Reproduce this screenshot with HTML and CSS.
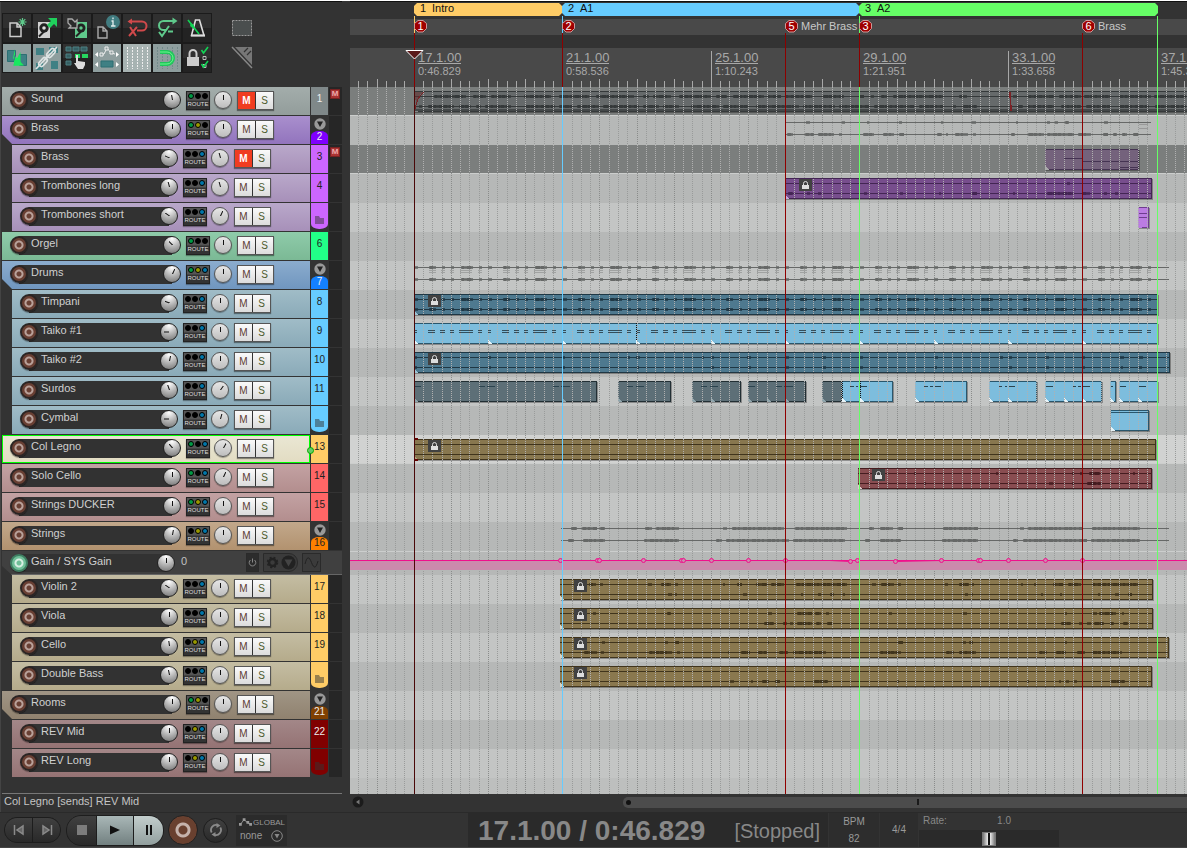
FILE: index.html
```html
<!DOCTYPE html>
<html lang="en">
<head>
<meta charset="utf-8">
<title>Arrange view</title>
<link rel="stylesheet" href="styles.css">
</head>
<body>
<div class="app">
  <main class="workspace">
    <section class="panel">
      <header class="toolbar">
        <div class="tools">
          <button class="tool" aria-label="New project"><svg viewBox="0 0 28 28"><path d="M7 9h7l4 4v9.500H7zM14 9v4h4" fill="none" stroke="#ccc" stroke-width="1.500"/><path d="M19.500 4v8M15.500 8h8M16.700 5.200l5.600 5.600M22.300 5.200l-5.600 5.600" stroke="#5fc98b" stroke-width="1.200"/></svg></button>
          <button class="tool" aria-label="Open project"><svg viewBox="0 0 28 28"><path d="M5 8h12v16H5z" fill="#d0d0d0"/><circle cx="11" cy="14" r="4.700" fill="#222"/><circle cx="11" cy="14" r="1.800" fill="#ddd"/><path d="M6 22.500l5-5" stroke="#222" stroke-width="2"/><path d="M15 4h9v9l-3-3-4 4-3-3 4-4z" fill="#1fd05c"/></svg></button>
          <button class="tool" aria-label="Save project"><svg viewBox="0 0 28 28"><path d="M12 8h12v16H12z" fill="#5fc98b"/><circle cx="18" cy="14" r="4.500" fill="#222"/><circle cx="18" cy="14" r="1.700" fill="#5fc98b"/><path d="M13 22.500l5-5" stroke="#222" stroke-width="2"/><path d="M5 5h4l3 3 2-2v8H6l2-2-3-3z" fill="#2a2a2a" stroke="#aaa" stroke-width="1.300"/></svg></button>
          <button class="tool" aria-label="Project settings"><svg viewBox="0 0 28 28"><path d="M5 13h5l4 4v7H5zM10 13v4h4" fill="none" stroke="#aaa" stroke-width="1.400"/><circle cx="20" cy="8" r="7" fill="#417c80"/><path d="M18.500 7H20v5M18 12h4.500M20 3.500v1.800" stroke="#e5eeee" stroke-width="1.300" fill="none"/></svg></button>
          <button class="tool" aria-label="Undo"><svg viewBox="0 0 28 28" fill="none" stroke="#d0494b" stroke-width="2"><path d="M6 7.500h13a4.500 4.500 0 0 1 0 9h-5M7 13l6 9M14 13l-8 9"/><path d="M4.500 7.500l4.500-3v6z" fill="#d0494b" stroke="none"/></svg></button>
          <button class="tool" aria-label="Redo"><svg viewBox="0 0 28 28" fill="none" stroke="#5fc98b" stroke-width="2"><path d="M22 7H10.500a4.300 4.300 0 0 0 0 9H13M6 18l3 4 7-10M15 17.500h5"/><path d="M24.500 7L19.500 3.500v7z" fill="#5fc98b" stroke="none"/></svg></button>
          <button class="tool" aria-label="Metronome"><svg viewBox="0 0 28 28" fill="none"><path d="M12.500 6h4l4.500 15.500H8.500z" stroke="#ddd" stroke-width="1.600"/><path d="M8 21.500h14" stroke="#ddd" stroke-width="2"/><path d="M5 6l11 14" stroke="#12d455" stroke-width="1.600"/><path d="M8 9l3 2 0 4-4-3z" fill="#12d455"/></svg></button>
          <button class="tool on" aria-label="Auto crossfade"><svg viewBox="0 0 28 28"><path d="M4.500 6.500h8v11h-8zM16.500 10.500h7v11h-7z" fill="#3f8084" stroke="#2c6f73"/><path d="M12 5v12L10 14zM11 21.500h10L11 11z" fill="#1ae85f"/><path d="M17.500 8v13.500H10z" fill="#1ae85f"/></svg></button>
          <button class="tool on" aria-label="Grouping"><svg viewBox="0 0 28 28"><path d="M3 4h8v7H3zM16 3h9v6h-9zM3 19h7v7H3zM18 17h7v8h-7z" fill="#3f8084"/><g fill="none" stroke="#dde3e3" stroke-width="1.700"><rect x="-5" y="-2.600" width="10" height="5.200" rx="2.600" transform="translate(10 18) rotate(-48)"/><rect x="-5" y="-2.600" width="10" height="5.200" rx="2.600" transform="translate(18 9) rotate(-48)"/><path d="M11 16l6-6M3 25L24 3"/></g></svg></button>
          <button class="tool" aria-label="Ripple editing"><svg viewBox="0 0 28 28"><path d="M3 3h5v4H3zM10 3h6v4h-6zM18 3h6v4h-6zM3 10h5v4H3zM3 17h5v4H3z" fill="#355f62" stroke="#4c8083"/><path d="M12 10h5v4h-5zM19 10h6v4h-6z" fill="#26d65f"/><path d="M13 11h2v6l7 1v3l-2 4h-5l-4-6 2 0z" fill="#ddd"/></svg></button>
          <button class="tool on" aria-label="Envelope points"><svg viewBox="0 0 28 28"><path d="M7 11l4-1 3-6 4 5 4 1" fill="none" stroke="#eee"/><path d="M7 9h3v3H7zM12 3h3v3h-3zM17 7h3v3h-3z" fill="#8e9e9e" stroke="#eee"/><path d="M8 17h12v6H8z" fill="#3f8084" stroke="#2c6f73"/><path d="M5 8v5L2 10.500zM23 8v5l3-2.500zM5 18v5l-3-2.500zM23 18v5l3-2.500z" fill="#fff"/></svg></button>
          <button class="tool pale" aria-label="Grid lines"><svg viewBox="0 0 28 28" stroke="#eee" stroke-dasharray="2 1"><path d="M4.500 3v22M9.500 3v22M14.500 3v22M19.500 3v22M24.500 3v22"/></svg></button>
          <button class="tool on" aria-label="Snap"><svg viewBox="0 0 28 28" fill="none"><path d="M4.500 3v22M9.500 3v22M14.500 3v22M19.500 3v22M24.500 3v22" stroke="#72898a" stroke-dasharray="2 1"/><path d="M7 8h7a6 6 0 0 1 0 12H7" stroke="#1fc75a" stroke-width="4"/><path d="M7 8h7a6 6 0 0 1 0 12H7" stroke="#6cf58f" stroke-width="1"/></svg></button>
          <button class="tool" aria-label="Locking"><svg viewBox="0 0 28 28" fill="none"><path d="M4 13h12v9H4z" fill="#ccc"/><path d="M6.500 13V9.500a3.500 3.500 0 0 1 7 0V13" stroke="#ccc" stroke-width="2"/><path d="M20 12.500h3v3h-3zM20 20.500h3v3h-3z" stroke="#bbb"/><path d="M18.500 6l2 3 4.500-6M18.500 20l2 3 4.500-6" stroke="#12d455" stroke-width="1.600"/></svg></button>
        </div>
        <div class="extras">
          <svg width="22" height="18" viewBox="0 0 22 18"><rect x="1.500" y="1.500" width="19" height="15" fill="#4a4e4e" stroke="#999" stroke-dasharray="2 1"/></svg>
          <svg width="22" height="24" viewBox="0 0 22 24"><path d="M1 1l20 21" stroke="#888" stroke-width="1.500" fill="none"/><path d="M4 1h17v18z" fill="#777"/><path d="M13 6l4-4M16 9l4-4" stroke="#333" stroke-width="1.200"/></svg>
        </div>
      </header>
      <div class="tracks" id="tracks"></div>
      <p class="status">Col Legno [sends] REV Mid</p>
    </section>
    <section class="timeline">
      <svg class="ruler" id="ruler" role="img" aria-label="Timeline ruler"></svg>
      <svg class="arrange" id="arrange" role="img" aria-label="Arrangement"></svg>
      <div class="scroll">
        <button class="scroll-back" aria-label="Scroll left"><svg width="12" height="12" viewBox="0 0 12 12"><circle cx="6" cy="6" r="5.500" fill="#1b1b1b"/><path d="M7.500 3.500v5L4 6z" fill="#777"/></svg></button>
        <div class="scroll-thumb"><i class="grip"></i><i class="mark"></i></div>
      </div>
    </section>
  </main>
  <footer class="transport">
    <div class="controls">
      <div class="pill small">
        <button aria-label="Go to start"><svg width="12" height="12" viewBox="0 0 12 12"><path d="M1.500 1v10M10 2v8L4 6z" fill="#666" stroke="#8a8a8a" stroke-width="1.500"/></svg></button>
        <button aria-label="Go to end"><svg width="12" height="12" viewBox="0 0 12 12"><path d="M10.500 1v10M2 2v8l6-4z" fill="#666" stroke="#8a8a8a" stroke-width="1.500"/></svg></button>
      </div>
      <div class="pill big">
        <button aria-label="Stop"><svg width="10" height="10"><rect width="10" height="10" fill="#7c7c7c"/></svg></button>
        <button class="lit play" aria-label="Play"><svg width="10" height="10"><path d="M0 0.500l10 4.500-10 4.500z" fill="#111"/></svg></button>
        <button class="lit" aria-label="Pause"><svg width="8" height="10"><path d="M1 0h2v10H1zM5 0h2v10H5z" fill="#111"/></svg></button>
      </div>
      <button class="record-big" aria-label="Record"></button>
      <button class="loop" aria-label="Repeat"><svg width="14" height="14" viewBox="0 0 14 14" fill="none" stroke="#8a8a8a" stroke-width="1.800"><path d="M2.700 9.500A5 5 0 0 1 8.500 2.200M11.300 4.500A5 5 0 0 1 5.500 11.800"/><path d="M7.500 0l4 2.500-4 2.500zM6.500 14l-4-2.500 4-2.500z" fill="#8a8a8a" stroke="none"/></svg></button>
      <div class="global">
        <label for="auto"><svg width="14" height="8" viewBox="0 0 14 8"><path d="M1.500 6.500l4-5 3.500 3 3 2" fill="none" stroke="#999"/><path d="M0 5h3v3H0zM4 0h3v3H4zM8 3h3v3H8zM11 5h3v3h-3z" fill="#999"/></svg>GLOBAL</label>
        <div class="auto">
          <select id="auto"><option>none</option></select>
          <svg width="12" height="12" viewBox="0 0 12 12"><circle cx="6" cy="6" r="5.300" fill="none" stroke="#888"/><path d="M3.500 4h5L6 8.500z" fill="#888"/></svg>
        </div>
      </div>
    </div>
    <div class="clock"><strong>17.1.00 / 0:46.829</strong><span>[Stopped]</span></div>
    <div class="cell bpm"><span>BPM</span><span>82</span></div>
    <div class="cell sig"><span>4/4</span></div>
    <div class="rate">
      <div class="rate-top"><label for="rate">Rate:</label><output for="rate">1.0</output></div>
      <input id="rate" type="range" min="0" max="100" value="50">
    </div>
  </footer>
</div>
<script src="app.js"></script>
</body>
</html>
```

FILE: styles.css
```css
* { box-sizing: border-box; }

body {
  margin: 0;
  background: #333;
  color: #c0c0c0;
  font: 11px/14px "Liberation Sans", Arial, sans-serif;
}

button {
  margin: 0;
  padding: 0;
  border: 0;
  background: none;
  color: inherit;
  font: inherit;
}

svg { display: block; }

.app {
  min-height: 100vh;
  display: flex;
  flex-direction: column;
  border-top: 1px solid #fff;
}

.workspace {
  flex: 1;
  display: grid;
  grid-template-columns: 342px minmax(0, 1fr);
  column-gap: 8px;
}

.panel {
  display: flex;
  flex-direction: column;
  padding-left: 2px;
  border-top: 1px solid #111;
  box-shadow: inset 1px 0 #444;
}

/* toolbar */
.toolbar {
  display: flex;
  gap: 19px;
  height: 85px;
  padding-top: 11px;
}

.tools {
  display: grid;
  grid-template-columns: repeat(7, 30px);
  grid-auto-rows: 30px;
}

.tool {
  border: 1px solid #1b1b1b;
  background: linear-gradient(#303030 50%, #232323 50%);
}
.tool.on { background: #8e9e9e; }
.tool.pale { background: #a7b3b2; }
.tool svg { width: 28px; height: 28px; }

.extras {
  display: flex;
  flex-direction: column;
  gap: 9px;
  padding-top: 6px;
}

/* track list */
.tracks { flex: 1; }

.track {
  display: flex;
  height: 29px;
  padding-bottom: 1px;
}

.strip {
  flex: 1;
  display: flex;
  align-items: flex-start;
  padding: 4px 36px 0 8px;
  background: linear-gradient(var(--top), var(--bottom));
}
.child .strip { margin-left: 10px; padding-right: 39px; }
.folder .strip { clip-path: polygon(0 0, 100% 0, 100% 100%, 10px 100%, 0 18px); }
.selected .strip { box-shadow: inset 0 0 0 1px #0f0; }
.selected { position: relative; }
.link {
  position: absolute;
  left: 305px;
  top: 12px;
  width: 7px;
  height: 7px;
  border: 1px solid #0a0;
  border-radius: 50%;
  background: #6c6;
}

.name {
  flex: 1;
  display: flex;
  height: 19px;
  margin-right: 5px;
  background: linear-gradient(90deg, transparent 9px, #323232 9px, #323232 calc(100% - 9px), transparent calc(100% - 9px));
}
.name span {
  flex: 1;
  padding-left: 3px;
  color: #d0d0d0;
}

.arm {
  width: 18px;
  height: 18px;
  border: 2px solid #2b2524;
  border-radius: 50%;
  background: radial-gradient(circle, #693f33 2px, #b9a19a 3px, #b9a19a 4px, #693f33 5px);
  box-shadow: 0 1px 1px #0006;
}

.knob, .dial {
  width: 18px;
  height: 18px;
  border-radius: 50%;
}
.knob {
  border: 1px solid #222;
  background: radial-gradient(circle at 50% 10%, #fff, #b5b5b5 50%, #707070);
}
.dial {
  margin: 0 5px 0 4px;
  border: 1px solid #555;
  background: linear-gradient(#e6e6e6, #bdbdbd);
  box-shadow: 0 1px 1px #0005;
}
.knob i, .dial i {
  display: block;
  width: 1px;
  height: 16px;
  margin: 0 auto;
  background: linear-gradient(transparent 3px, #111 3px, #111 8px, transparent 8px);
}

.route {
  width: 24px;
  height: 19px;
  padding-top: 1px;
  background: linear-gradient(#555 8px, #333 9px);
  color: #ddd;
  font-size: 6px;
  line-height: 9px;
  text-align: center;
  border: 1px solid #222;
  box-shadow: 0 1px 1px #0005;
}
.leds { display: flex; justify-content: center; gap: 1px; height: 7px; }
.leds i { width: 6px; height: 6px; border-radius: 50%; background: #000; border: 1px solid #000; }
.leds .g { background: #094; }
.leds .y { background: #990; }
.leds .b { background: #07a; }

.ms {
  display: flex;
  border: 1px solid #555;
  height: 19px;
  background: #333;
  gap: 1px;
  box-shadow: 0 1px 1px #0006;
}
.ms button {
  width: 17px;
  background: linear-gradient(#fafafa, #dcdcdc);
  color: #5c3b33;
  font-size: 10px;
  line-height: 17px;
}
.ms button + button { color: #4d5a2d; }
.ms .muted { background: #f03c20; color: #fff; font-weight: bold; }

.num {
  width: 17px;
  margin-left: 1px;
  padding-top: 6px;
  background: var(--num);
  color: #222;
  font-size: 10px;
  line-height: 12px;
  text-align: center;
}
.num.pale { color: #eee; }
.folder .num, .parent .num {
  display: flex;
  flex-direction: column;
  justify-content: space-between;
  align-items: center;
  padding-top: 2px;
  background: none;
}
.num b {
  width: 17px;
  height: 13px;
  border-radius: 8px 8px 0 0 / 5px 5px 0 0;
  background: var(--num);
  font-weight: normal;
  line-height: 12px;
}
.last .num {
  margin-bottom: 2px;
  padding: 13px 4px 0;
  border-radius: 0 0 8px 8px / 0 0 5px 5px;
}

.meter {
  width: 13px;
  margin-left: 1px;
  padding: 2px 1px;
  background: #262626;
}
.meter b {
  display: block;
  width: 10px;
  height: 10px;
  background: #a33;
  border: 1px solid #722;
  color: #eaa;
  font-size: 8px;
  line-height: 8px;
  text-align: center;
}

.envelope {
  display: flex;
  align-items: center;
  height: 24px;
  padding-left: 8px;
  padding-right: 21px;
  border-bottom: 1px solid #666;
  background: #404040;
  clip-path: polygon(0 0, 100% 0, 100% 100%, 10px 100%, 0 15px);
}
.envelope .name { flex: 0 0 165px; height: 18px; margin-right: 6px; }
.envelope .arm { border-color: #3f7f62; background: radial-gradient(circle, #6fbf98 2px, #d8eee2 3px, #d8eee2 4px, #6fbf98 5px); }
.envelope output { flex: 1; height: 18px; }
.env-tools { display: flex; gap: 4px; }
.env-tools button { border: 1px solid #2a2a2a; background: #3b3b3b; height: 19px; }
.env-tools .fx { border-radius: 0 9px 9px 0; }
.env-tools .power { background: #2c2c2c; }

.status {
  margin: 0;
  border-top: 1px solid #777;
  height: 19px;
  padding-left: 2px;
  color: #c4c4c4;
}

/* timeline */
.timeline { display: flex; flex-direction: column; }
.ruler { width: 100%; height: 86px; }
.arrange { width: 100%; height: 707px; }
.ruler text { font-family: "Liberation Sans", Arial, sans-serif; }

.scroll {
  flex: 1;
  display: flex;
  align-items: center;
  padding: 0 0 2px 2px;
}
.scroll-back { width: 12px; height: 12px; }
.scroll-thumb {
  flex: 1;
  display: flex;
  align-items: center;
  height: 11px;
  margin-left: 31%;
  padding-left: 3px;
  border-radius: 5px 0 0 5px;
  background: #4c4c4c;
}
.grip { width: 5px; height: 5px; border-radius: 50%; background: #111; }
.mark { width: 2px; height: 6px; margin-left: 51%; background: #1a1a1a; }

/* transport */
.transport {
  display: flex;
  height: 36px;
  border-top: 1px solid #2a2a2a;
  border-bottom: 1px solid #444;
}
.controls {
  flex: 0 0 468px;
  display: flex;
  align-items: center;
  padding-left: 4px;
}
.pill { display: flex; overflow: hidden; border: 1px solid #1d1d1d; background: #1d1d1d; gap: 1px; }
.pill button {
  flex: 1;
  display: grid;
  place-items: center;
  background: linear-gradient(#404040, #292929);
}
.pill.small { width: 57px; height: 26px; border-radius: 13px; margin-right: 5px; }
.pill.big { width: 98px; height: 31px; border-radius: 15px; margin-right: 4px; }
.pill .lit { background: linear-gradient(#c3cecd, #929f9e); }
.pill .play { flex: 0 0 36px; background: linear-gradient(#a9b7b7, #728080); }
.record-big {
  width: 30px;
  height: 30px;
  border: 1px solid #222;
  border-radius: 50%;
  background: radial-gradient(circle, #69402f 4px, #c5b2ab 5px, #c5b2ab 7px, #69402f 8px);
  margin-right: 5px;
}
.loop {
  display: grid;
  place-items: center;
  width: 25px;
  height: 25px;
  border: 1px solid #1d1d1d;
  border-radius: 50%;
  background: linear-gradient(#404040, #292929);
  margin-right: 8px;
}
.global {
  width: 51px;
  height: 31px;
  padding: 1px 2px 1px 3px;
  background: #2b2b2b;
  color: #999;
}
.global label { display: flex; align-items: center; gap: 1px; font-size: 8px; line-height: 13px; }
.auto { display: flex; align-items: center; justify-content: space-between; padding-right: 2px; }
.auto select {
  appearance: none;
  width: 28px;
  padding: 0 0 0 1px;
  border: 0;
  background: none;
  color: #999;
  font: 10px/14px "Liberation Sans", Arial, sans-serif;
}
.clock {
  flex: 0 0 360px;
  display: flex;
  align-items: center;
  padding: 2px 8px 0 10px;
  justify-content: space-between;
  background: #2a2a2a;
  color: #888;
}
.clock strong { font-size: 28px; line-height: 32px; }
.clock span { font-size: 20px; line-height: 30px; }
.cell {
  display: flex;
  flex-direction: column;
  justify-content: space-around;
  align-items: center;
  margin-left: 1px;
  background: #2d2d2d;
  color: #999;
  font-size: 10px;
}
.bpm { width: 50px; }
.sig { width: 38px; }
.rate { width: 140px; margin-left: 1px; display: flex; flex-direction: column; color: #888; font-size: 10px; }
.rate-top { display: flex; padding: 1px 48px 2px 4px; justify-content: space-between; }
.rate input {
  appearance: none;
  width: 100%;
  flex: 1;
  margin: 0;
  background: #2a2a2a;
}
.rate input::-webkit-slider-thumb {
  appearance: none;
  width: 14px;
  height: 14px;
  border: 1px solid #777;
  background: linear-gradient(90deg, #777, #eee 5px, #111 5px, #111 7px, #eee 7px, #777);
}
```

FILE: app.js
```js
const palettes = {
  slate: ["#a3adab", "#939d9b", "#7f8889"],
  violet: ["#a98fcd", "#9274bd", "#7f00ff"],
  lilac: ["#b9a8ca", "#a790b9", "#cc66ff"],
  green: ["#8fcbaa", "#7bb995", "#22ff88"],
  blue: ["#8bacce", "#7096bf", "#1480ff"],
  sky: ["#a0bcc7", "#8aaab8", "#66ccff"],
  cream: ["#eae7d4", "#e2dcc2", "#ffcc66"],
  rose: ["#c3a2a3", "#b38e8e", "#ff6666"],
  tan: ["#c2a88b", "#b2926f", "#ff8000"],
  sand: ["#c4bda3", "#b5ab8b", "#ffcc66"],
  stone: ["#a09585", "#90826f", "#804000"],
  wine: ["#a38788", "#957374", "#800000"]
};

const tracks = [
  { n: 1, name: "Sound", c: "slate", led: "g..", k: -10, d: 0, mute: 1, pale: 1 },
  { n: 2, name: "Brass", c: "violet", led: "gy.", k: 0, d: 0, folder: 1, pale: 1 },
  { n: 3, name: "Brass", c: "lilac", led: "..b", k: -65, d: -15, child: 1, mute: 1 },
  { n: 4, name: "Trombones long", c: "lilac", led: "..b", k: -15, d: -15, child: 1 },
  { n: 5, name: "Trombones short", c: "lilac", led: "..b", k: -55, d: 25, child: 1, last: 1 },
  { n: 6, name: "Orgel", c: "green", led: "g..", k: -45, d: 0 },
  { n: 7, name: "Drums", c: "blue", led: "gyb", k: 25, d: 0, folder: 1, pale: 1 },
  { n: 8, name: "Timpani", c: "sky", led: "..b", k: -70, d: 0, child: 1 },
  { n: 9, name: "Taiko #1", c: "sky", led: "..b", k: -90, d: 0, child: 1 },
  { n: 10, name: "Taiko #2", c: "sky", led: "..b", k: 12, d: 0, child: 1 },
  { n: 11, name: "Surdos", c: "sky", led: "..b", k: -20, d: 35, child: 1 },
  { n: 12, name: "Cymbal", c: "sky", led: "..b", k: -90, d: 15, child: 1, last: 1 },
  { n: 13, name: "Col Legno", c: "cream", led: "g.b", k: -40, d: 30, selected: 1 },
  { n: 14, name: "Solo Cello", c: "rose", led: "g.b", k: 0, d: 25 },
  { n: 15, name: "Strings DUCKER", c: "rose", led: "gyb", k: 0, d: 0 },
  { n: 16, name: "Strings", c: "tan", led: ".yb", k: 10, d: 0, parent: 1 },
  { envelope: 1, name: "Gain / SYS Gain" },
  { n: 17, name: "Violin 2", c: "sand", led: "..b", k: -55, d: 0, child: 1 },
  { n: 18, name: "Viola", c: "sand", led: "..b", k: 0, d: 0, child: 1 },
  { n: 19, name: "Cello", c: "sand", led: ".yb", k: -8, d: 0, child: 1 },
  { n: 20, name: "Double Bass", c: "sand", led: "..b", k: -12, d: 0, child: 1, last: 1 },
  { n: 21, name: "Rooms", c: "stone", led: "gy.", k: 0, d: 0, folder: 1, pale: 1 },
  { n: 22, name: "REV Mid", c: "wine", led: ".yb", k: 0, d: 0, child: 1, pale: 1 },
  { n: 23, name: "REV Long", c: "wine", led: ".yb", k: 0, d: 0, child: 1, last: 1 }
];

const collapse = '<svg width="12" height="12" viewBox="0 0 12 12"><circle cx="6" cy="6" r="5.700" fill="#999"/><path d="M3 3.500h6L6 9z" fill="#222"/></svg>';
const folderIcon = '<svg width="9" height="8" viewBox="0 0 9 8"><path d="M0 0h4l1 2h4v6H0z" fill="#333" opacity=".5"/></svg>';

function envelopeRow(t) {
  return `<div class="envelope">
    <div class="name"><button class="arm" aria-label="Arm envelope"></button><span>${t.name}</span>
      <button class="knob" aria-label="Envelope value"><i></i></button></div>
    <output>0</output>
    <div class="env-tools">
      <button class="power" aria-label="Bypass"><svg width="11" height="17" viewBox="0 0 11 17" fill="none" stroke="#888"><path d="M3.500 6a3.300 3.300 0 1 0 4 0M5.500 4.500v4"/></svg></button>
      <button class="fx" aria-label="Modulation"><svg width="33" height="17" viewBox="0 0 33 17"><circle cx="8.500" cy="8.500" r="3.500" fill="none" stroke="#222" stroke-width="2.500"/><circle cx="8.500" cy="8.500" r="5" fill="none" stroke="#222" stroke-width="1.500" stroke-dasharray="2 2"/><circle cx="24.500" cy="8.500" r="7" fill="#222"/><path d="M20.500 5.500h8l-4 7z" fill="#444"/></svg></button>
      <button aria-label="Shape"><svg width="17" height="17" viewBox="0 0 17 17"><path d="M2 10c2-8 4-8 6.500-1.500s4.500 6 6.500-1.500" fill="none" stroke="#222"/></svg></button>
    </div></div>`;
}

function trackRow(t) {
  if (t.envelope) return envelopeRow(t);
  const [top, bottom, num] = palettes[t.c];
  const kinds = ["folder", "parent", "child", "last", "selected"].filter(k => t[k]).join(" ");
  const leds = [...t.led].map(l => `<i class="${l === "." ? "" : l}"></i>`).join("");
  let badge = t.n;
  if (t.folder || t.parent) badge = `${collapse}<b>${t.n}</b>`;
  if (t.last) badge = folderIcon;
  return `<div class="track ${kinds}" style="--top:${top};--bottom:${bottom};--num:${num}">
    <div class="strip">
      <div class="name"><button class="arm" aria-label="Record arm ${t.name}"></button><span>${t.name}</span>
        <button class="knob" aria-label="Volume"><i style="transform:rotate(${t.k}deg)"></i></button></div>
      <button class="route"><div class="leds">${leds}</div>ROUTE</button>
      <button class="dial" aria-label="Pan"><i style="transform:rotate(${t.d}deg)"></i></button>
      <div class="ms"><button class="${t.mute ? "muted" : ""}">M</button><button>S</button></div>
    </div>
    <div class="num ${t.pale ? "pale" : ""}">${badge}</div>
    <div class="meter">${t.mute ? "<b>M</b>" : ""}</div>
    ${t.selected ? '<i class="link"></i>' : ""}
  </div>`;
}
document.getElementById("tracks").innerHTML = tracks.map(trackRow).join("");

/* Timeline: x is in workspace pixels, shifted left by the panel width. */
const LEFT = 350, TOP = 87, END = 794;
const gridX = k => Math.floor(414.2 + k * 9.285);
const rect = (x, y, w, h, fill, extra = "") => `<rect x="${x}" y="${y}" width="${w}" height="${h}" fill="${fill}" ${extra}/>`;
const steps = [];
for (let k = -6; k < 260; k++) steps.push(k);

/* ruler */
let r = rect(LEFT, 1, 4000, 1, "#111") + rect(LEFT, 19, 4000, 16, "#494949") + rect(LEFT, 48, 4000, 39, "#494949");
[[414, 562, "#ffcc66", "1", "Intro"], [562, 859, "#66ccff", "2", "A1"], [859, 1158, "#66ff66", "3", "A2"]].forEach(([a, b, c, n, s]) => {
  r += `<path d="M${a + 3} 3H${b - 3}l3 3v7l-3 3H${a + 3}l-3 -3v-7z" fill="${c}"/>`;
  r += `<text x="${a + 6}" y="12" font-size="11" fill="#111">${n}</text><text x="${a + 18}" y="12" font-size="11" fill="#111">${s}</text>`;
});
steps.forEach(k => {
  const y = k % 16 === 0 ? 51 : k % 4 === 0 ? 79 : 81;
  r += rect(gridX(k), y, 1, 87 - y, "#a8a8a8");
});
[["17.1.00", "0:46.829", 418], ["21.1.00", "0:58.536", 566], ["25.1.00", "1:10.243", 715], ["29.1.00", "1:21.951", 863], ["33.1.00", "1:33.658", 1012], ["37.1.00", "1:45.365", 1161]].forEach(([a, b, x]) => {
  r += `<text x="${x}" y="62" font-size="13" fill="#a8a8a8">${a}</text>` + rect(x, 63, 43, 1, "#a8a8a8");
  r += `<text x="${x}" y="75" font-size="11" fill="#a8a8a8">${b}</text>`;
});
[[414, "#ffcc66"], [562, "#66ccff"], [859, "#66ff66"]].forEach(([x, c]) => { r += rect(x, 16, 1, 17, c); });
[414, 562, 785, 859, 1082].forEach(x => { r += rect(x, 33, 1, 54, "#8c0000"); });
r += rect(1157, 16, 1, 71, "#66ff66");
[[414, 1, ""], [562, 2, ""], [785, 5, "Mehr Brass"], [859, 3, ""], [1082, 6, "Brass"]].forEach(([x, n, s]) => {
  r += `<path d="M${x + 4} 20.500h5l3.500 3v5l-3.500 3.500h-5l-3.500 -3.500v-5z" fill="#a00000" stroke="#c99"/>`;
  r += `<text x="${x + 6.500}" y="30" font-size="11" fill="#fff" text-anchor="middle">${n}</text><text x="${x + 16}" y="30" font-size="11" fill="#c8c8c8">${s}</text>`;
});
r += '<path d="M406 50.500h17l-8.500 8.500z" fill="#5a1a1a" stroke="#fff"/>';
document.getElementById("ruler").innerHTML = `<g transform="translate(${-LEFT} -1)">${r}</g>`;

/* arrangement */
const laneY = i => i < 16 ? TOP + i * 29 : 575 + (i - 16) * 29;
const light = "#c3c5c4", dark = "#b6b8b7";
let lanes = rect(LEFT, TOP, 4000, 707, "#bdbfbe");
for (let i = 0; i < 23; i++) {
  let c = i % 2 ? dark : light;
  if (i === 0 || i === 2) c = "#7b7e7d";
  if (i === 12) c = "#d1d2d1";
  lanes += rect(LEFT, laneY(i), 4000, 29, c);
}
lanes += rect(LEFT, 551, 4000, 24, dark);
[115, 173, 463, 551].forEach(y => { lanes += rect(LEFT, y, 4000, 1, "#cccecd"); });

const segs = s => s.trim().split(/\s+/).map(p => p.split("-").map(Number));
/* A thick, slightly ragged run of waveform on a centre line. */
function wave(y, list, fill) {
  let out = "";
  segs(list).forEach(([a, b]) => {
    const w = b - a;
    out += rect(a, y, w, 1, fill);
    out += rect(w > 4 ? a + 1 : a, y - 1, w > 4 ? w - 2 : w, 3, fill, 'opacity=".75"');
    for (let x = a + 2; x < b - 3; x += 5) out += rect(x, y - 1, 2 + (x + y) % 3, 3, fill);
  });
  return out;
}
const repeat = (pattern, a, n) => {
  const out = [];
  for (let i = 0; i < n; i++) segs(pattern).forEach(([p, q]) => out.push(`${Math.round(a + i * 74.28 + p)}-${Math.round(a + i * 74.28 + q)}`));
  return out.join(" ");
};
const beat = "0-4 14-23 27-32 36-41 46-60 64-69";

let clips = "", cuts = "";
function clip(lane, a, b, fill, edge, opts = {}) {
  const y = laneY(lane) + 4, w = b - a;
  clips += rect(a + 1, y + 1, w, 21, "#000", 'opacity=".3"') + rect(a, y, w, 21, fill) + rect(a, y, w, 1, edge) + rect(a, y + 20, w, 1, edge);
  if (opts.wave) clips += rect(a, y + 5, w, 1, edge) + rect(a, y + 15, w, 1, edge);
  if (opts.a) clips += wave(y + 5, opts.a, edge);
  if (opts.b) clips += wave(y + 15, opts.b, edge);
  if (!opts.open) clips += rect(b - 1, y, 1, 21, edge);
  (opts.splits || []).concat(a).forEach(x => {
    if (x !== a || opts.dash) clips += `<path d="M${x + .5} ${y}v21" stroke="#111" stroke-dasharray="1 1"/>`;
    clips += `<path d="M${x} ${y + 21}v-4l4 4z" fill="${opts.corner || "#e8f4f8"}"/>`;
  });
  cuts += rect(a, y, w, 21, "#000");
}
function note(y, list, fill) { segs(list).forEach(([a, b]) => { clips += rect(a, y, b - a, 1, fill); }); }

clip(0, 414, 2400, "#666a6b", "#35393a", { wave: 1, open: 1, corner: "#888",
  a: "433-467 472-487 490-512 523-552 558-590 595-635 642-650 652-672 678-712 715-728 732-765 766-782 784-813 822-845 858-865 870-875 880-888 892-945 958-968 1013-1017 1027-1055 1058-1082 1083-1112 1118-1152 1153-1187",
  b: "419-422 427-455 458-472 475-482 484-512 524-556 558-574 576-600 602-640 642-660 662-680 690-720 722-750 755-800 802-836 838-870 873-915 918-945 952-957 962-978 1016-1024 1026-1055 1060-1082 1085-1112 1118-1150 1154-1187" });
clips += rect(414, 109, 2000, 2, "#444849");
clips += '<path d="M415 92h9q-8 4 -8 16z" fill="#6a2a2a" opacity=".5"/><path d="M415 109q2 -12 9 -17M1009 92l3 19M1011 92l-1 19" stroke="#7a2226" fill="none"/>';

const grey = "#666867";
clips += rect(785, 122, 366, 1, grey) + rect(785, 134, 366, 1, grey);
clips += wave(122, "806-810 842-845 867-869 899-902 941-943 972-976 1016-1018 1047-1050 1054-1059 1064-1070 1104-1108", grey);
clips += wave(134, "786-794 804-815 817-835 839-842 862-875 882-895 898-905 936-943 946-948 954-969 972-977 1010-1016 1027-1045 1046-1075 1077-1092 1102-1108 1112-1118 1121-1128 1132-1139", grey);
note(124, "1139-1148", "#999"); note(128, "1139-1148", "#999");

clip(2, 1045, 1139, "#74627c", "#453352", { dash: 1, corner: "#aaa" });
note(158, "1064-1082", "#453352"); note(161, "1082-1139", "#453352"); note(167, "1119-1139", "#453352");
clip(3, 785, 1152, "#774e8d", "#432553", { wave: 1, a: "1067-1070", corner: "#c9a9dc",
  b: "787-794 807-810 818-821 864-867 899-904 939-941 971-977 1013-1015 1046-1074 1081-1091 1104-1107 1115-1118" });
clip(4, 1138, 1149, "#bb7ce2", "#6f3c90", { corner: "#bb7ce2", dash: 1 });
note(213, "1138-1148", "#6f3c90"); note(217, "1138-1148", "#6f3c90");

clips += rect(414, 267, 755, 1, grey) + rect(414, 279, 755, 1, grey);
clips += wave(267, repeat(beat, 414, 10), grey) + wave(279, repeat(beat, 414, 10), grey);
note(270, repeat("15-22 27-31 36-40 46-58 64-68", 414, 10), "#a0a2a1");
note(272, repeat("15-22 27-31 36-40 46-58 64-68", 414, 10), "#a0a2a1");

clip(7, 414, 1158, "#4e798f", "#1f3744", { wave: 1, corner: "#9cc4d6", a: repeat(beat, 414, 10), b: repeat(beat, 414, 10) });
clip(8, 414, 1158, "#7dbddd", "#29566c", { splits: [488, 562, 636, 711, 785, 859, 934, 1008, 1082], open: 1 });
const hits = "0-3 14-21 26-31 36-40 45-59 64-68";
note(330, repeat(hits, 414, 10), "#334e5c"); note(332, repeat(hits, 414, 10), "#334e5c");
clip(9, 414, 1170, "#4e798f", "#1f3744", { wave: 1, corner: "#9cc4d6",
  a: "414-417 488-491 563-565 628-630 636-640 702-704 710-715 747-751 785-790 822-826 860-863 934-939 1000-1003 1008-1013 1045-1049 1082-1085 1120-1124 1139-1143",
  b: "415-417 489-491 563-565 637-639 711-714 748-751 786-789 823-826 860-863 935-937 1009-1012 1046-1049 1083-1085 1121-1123 1139-1142" });
[[414, 597, [562]], [618, 671, []], [692, 741, [711]], [748, 806, [767, 785]], [822, 842, []]].forEach(([a, b, splits]) => clip(10, a, b, "#5d6f77", "#222f34", { splits, dash: 1, corner: "#8fa5ac" }));
[[842, 893, [860]], [915, 967, []], [989, 1037, [1008]], [1045, 1102, [1064, 1082]], [1110, 1116, []], [1119, 1158, [1138]]].forEach(([a, b, splits]) => clip(10, a, b, "#7dbddd", "#29566c", { splits, dash: 1 }));
note(386, "415-421 479-485 487-495 553-559 561-570 627-633 636-644 701-707 710-718 748-755 776-782 784-793 850-854 856-858 860-867 924-928 930-933 935-941 999-1002 1005-1007 1009-1015 1046-1053 1073-1076 1078-1081 1083-1090 1111-1113 1120-1126 1139-1146", "#2b434e");
clip(11, 1111, 1149, "#7dbddd", "#29566c"); note(412, "1111-1149", "#29566c");
clip(12, 414, 1156, "#88774f", "#40341c", { wave: 1, corner: "#b5a67e" });
clips += rect(414, 438, 4, 2, "#600") + rect(414, 459, 4, 2, "#600");
clip(13, 858, 1152, "#894d51", "#451c20", { wave: 1, corner: "#dcc", a: "914-916 996-998 1072-1074 1079-1084 1088-1101 1133-1135", b: "924-926 1049-1053 1072-1074 1086-1102" });

clips += rect(561, 528, 608, 1, grey) + rect(561, 540, 608, 1, grey);
clips += wave(528, "570-578 581-598 599-606 644-653 655-680 723-727 731-785 794-848 868-875 879-894 897-903 942-978 1020-1024 1027-1083 1091-1141", grey);
clips += wave(540, "567-575 582-606 643-680 715-723 725-790 792-846 864-871 879-902 941-979 1012-1019 1022-1088 1090-1141", grey);

const gold = "#8a784f", brown = "#40341c", goldCorner = "#d8d4c4";
clip(16, 560, 1153, gold, brown, { wave: 1, corner: goldCorner,
  a: "588-597 600-603 648-652 660-672 674-678 723-725 736-742 755-768 770-785 795-848 872-876 880-895 897-902 945-948 958-970 972-974 1021-1023 1033-1038 1052-1064 1067-1082 1091-1140",
  b: "668-672 674-677 743-747 801-803 817-822 829-835 843-845 965-968 971-973 1041-1043 1060-1062 1098-1100 1115-1119 1127-1133" });
clip(17, 560, 1153, gold, brown, { wave: 1, corner: goldCorner,
  a: "592-597 666-672 768-772 796-813 814-822 826-829 888-893 963-967 1065-1067 1093-1097 1098-1117 1122-1124",
  b: "763-775 782-788 790-793 796-813 815-822 826-832 1060-1072 1078-1083 1087-1091 1093-1105 1109-1115 1122-1129" });
clip(18, 560, 1169, gold, brown, { wave: 1, corner: goldCorner,
  a: "601-606 664-668 674-680 767-769 897-903 962-967 968-974 1065-1067",
  b: "583-598 600-605 648-673 677-680 728-730 740-751 757-769 778-789 792-827 879-902 945-955 958-977 1038-1048 1055-1067 1076-1086 1091-1123" });
clip(19, 560, 1152, gold, brown, { wave: 1, corner: goldCorner,
  b: "730-734 751-753 761-770 774-781 813-829 897-899 1027-1029 1059-1061 1065-1070 1073-1078 1110-1126" });

/* gain envelope */
let env = rect(LEFT, 561, 4000, 9, "#cb8aac") + rect(LEFT, 560, 4000, 1, "#f0108c");
env += '<path d="M830 560.500l20 1M895 561.500l46 -1" stroke="#f0108c" shape-rendering="auto"/>';
[560, 597, 599, 643, 681, 683, 711, 748, 785, 850, 857, 895, 941, 978, 980, 1008, 1045, 1082].forEach(x => {
  env += `<circle cx="${x + .5}" cy="${x === 850 || x === 895 ? 561.500 : 560.500}" r="2" fill="#cb8aac" stroke="#f0108c" shape-rendering="auto"/>`;
});

const locks = [[428, 7], [428, 9], [428, 12], [799, 3], [872, 13], [574, 16], [574, 17], [574, 18], [574, 19]].map(([x, i]) => {
  const y = laneY(i) + 5;
  return rect(x, y, 13, 12, "#414141") + rect(x + 3, y + 6, 7, 4, "#ddd") + `<path d="M${x + 4.500} ${y + 6}v-1.500a2 2 0 0 1 4 0v1.500" fill="none" stroke="#ddd" shape-rendering="auto"/>`;
}).join("");

const gridPath = steps.map(k => `M${gridX(k) + .5} ${TOP}V${END}`).join("");
const boldPath = steps.filter(k => k % 4 === 0).map(k => `M${gridX(k) + .5} ${TOP}V${END}`).join("");
cuts += rect(LEFT, 87, 4000, 28, "#000") + rect(LEFT, 145, 4000, 28, "#000");

const lines = [[562, "#66ccff"], [785, "#900000"], [859, "#66ff66"], [1082, "#900000"], [1157, "#66ff66"], [414, "#4a0808"]].map(([x, c]) => rect(x, TOP, 1, END - TOP, c)).join("");

document.getElementById("arrange").innerHTML = `
  <defs><clipPath id="cuts">${cuts}</clipPath></defs>
  <g transform="translate(${-LEFT} ${-TOP})" shape-rendering="crispEdges">
    ${lanes}
    <path d="${gridPath}" stroke="#999b9a" stroke-dasharray="1 1"/>
    <path d="${boldPath}" stroke="#8a8c8b" stroke-dasharray="1 1"/>
    ${clips}
    <g clip-path="url(#cuts)"><path d="${gridPath}" stroke="#b0b0b0" stroke-dasharray="1 1"/></g>
    ${env}${lines}${locks}
  </g>`;
```
